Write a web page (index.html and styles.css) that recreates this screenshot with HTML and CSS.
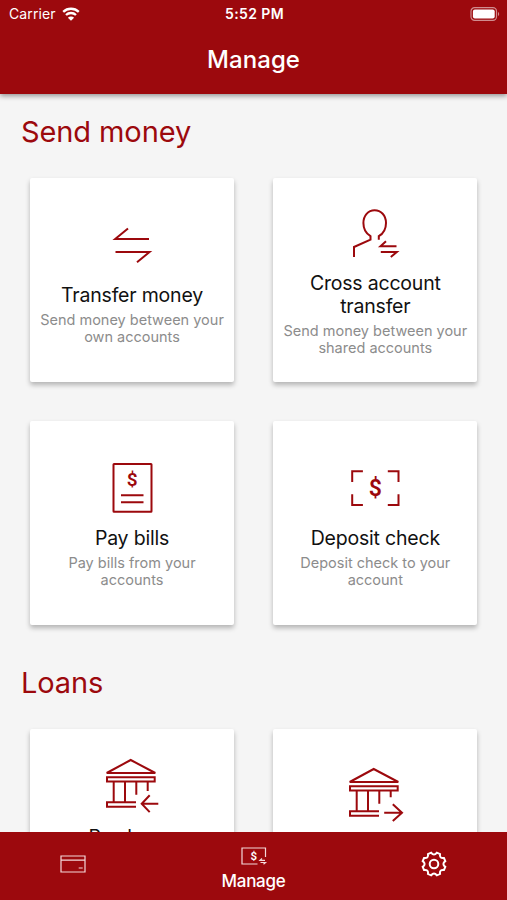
FILE: index.html
```html
<!DOCTYPE html>
<html lang="en">
<head>
  <meta charset="UTF-8">
  <title>Manage</title>
  <link rel="stylesheet" href="styles.css">
</head>
<body>
  <header class="header">
    <div class="status">
      <div class="carrier">
        <span>Carrier</span>
        <svg class="wifi" width="18" height="14" viewBox="0 0 18 14">
          <path d="M1.2 4.9a11.2 11.2 0 0 1 15.6 0M4 8a7.2 7.2 0 0 1 10 0" />
          <path class="fill" d="M9 13.8L5.9 10.7a4.4 4.4 0 0 1 6.2 0z" />
        </svg>
      </div>
      <div class="time">5:52 PM</div>
      <svg class="battery" width="30" height="14" viewBox="0 0 30 14">
        <rect class="shell" x="1" y="0.7" width="25.5" height="12.6" rx="3.6" />
        <rect class="charge" x="2.9" y="2.6" width="21.8" height="8.8" rx="2" />
        <path class="cap" d="M28 5v4a2.3 2.3 0 0 0 0-4z" />
      </svg>
    </div>
    <h1>Manage</h1>
  </header>

  <main class="content">
    <h2>Send money</h2>
    <div class="cards">
      <div class="card">
        <svg class="icon" viewBox="0 0 60 60">
          <path d="M47 23H13.2L26 12.5M13.5 36h34L35 46.3" />
        </svg>
        <h3>Transfer money</h3>
        <p>Send money between your own accounts</p>
      </div>
      <div class="card">
        <svg class="icon" viewBox="0 0 60 60">
          <path d="M33.8 35.8v-3.6C38.5 29.5 41 24 41 19C41 11.5 36 6.2 29.6 6.2S18.4 11.5 18.4 19C18.4 24 21 29.5 25.5 32.2v3.4L9 43v10" />
          <path d="M51.5 42.3H35.5L41 37.3M35.8 48h16L45.8 53" />
        </svg>
        <h3>Cross account transfer</h3>
        <p>Send money between your shared accounts</p>
      </div>
      <div class="card">
        <svg class="icon" viewBox="0 0 60 60">
          <rect x="11.5" y="5" width="38" height="47.8" rx="0.5" />
          <path d="M19 36.3h22.5M19 43.3h22.5" />
          <text x="30.3" y="27.2" font-size="19">$</text>
        </svg>
        <h3>Pay bills</h3>
        <p>Pay bills from your accounts</p>
      </div>
      <div class="card">
        <svg class="icon" viewBox="0 0 60 60">
          <path d="M7.2 23V12.3h10.7M42.8 12.3h10.7V23M53.5 35.3V46H42.8M17.9 46H7.2V35.3" />
          <text x="30.2" y="37" font-size="23">$</text>
        </svg>
        <h3>Deposit check</h3>
        <p>Deposit check to your account</p>
      </div>
    </div>

    <h2>Loans</h2>
    <div class="cards">
      <div class="card">
        <svg class="icon bank" viewBox="0 0 60 66">
          <path d="M28.7 8L53.3 21H4.7zM5 25.2h47.7v4.2H5z" />
          <path d="M11.7 29.4v21M23 29.4v21M34.3 29.4v13.4M45.7 29.4V39M34 50.3H5v4.4h29" />
          <path d="M56.3 51.7H39.7M47.7 43.3l-8 8.4l8 8.4" />
        </svg>
        <h3>Pay loans<br>installment</h3>
        <p>Pay loan installments from your account</p>
      </div>
      <div class="card">
        <svg class="icon bank" viewBox="0 0 60 66">
          <path d="M28.7 8L53.3 21H4.7zM5 25.2h47.7v4.2H5z" />
          <path d="M11.7 29.4v21M23 29.4v21M34.3 29.4v13.4M45.7 29.4v6.8M34 50.3H5v4.4h29" />
          <path d="M39.2 51.7h18M47.8 43.3l9.2 8.4l-9.2 8.4" />
        </svg>
        <h3>Transfer money from loan</h3>
        <p>Use your credit line</p>
      </div>
    </div>
  </main>

  <nav class="tabs">
    <div class="tab">
      <svg width="26" height="18" viewBox="0 0 26 18">
        <path d="M1 1h24v16H1zM1 5.2h24M18.7 13h4" />
      </svg>
    </div>
    <div class="tab active">
      <svg width="26" height="19" viewBox="0 0 26 19">
        <path d="M16.5 17H1V1h23.5v9" />
        <path d="M24 13.3h-5l2-1.8M19.5 15.5h5l-2 1.8" />
        <text x="12.9" y="13" font-size="11.5">$</text>
      </svg>
      <span>Manage</span>
    </div>
    <div class="tab">
      <svg class="gear" width="26" height="26" viewBox="-13 -13 26 26">
        <path d="M-2.9 -11.3Q0 -7.5 2.9 -11.3L6 -10Q5.3 -5.3 10 -6L11.3 -2.9Q7.5 0 11.3 2.9L10 6Q5.3 5.3 6 10L2.9 11.3Q0 7.5 -2.9 11.3L-6 10Q-5.3 5.3 -10 6L-11.3 2.9Q-7.5 0 -11.3 -2.9L-10 -6Q-5.3 -5.3 -6 -10z" />
        <circle r="4.3" />
      </svg>
    </div>
  </nav>
</body>
</html>
```

FILE: styles.css
```css
* {
  box-sizing: border-box;
}

body {
  margin: 0;
  height: 100vh;
  display: flex;
  flex-direction: column;
  overflow: hidden;
  background: #f5f5f5;
  font-family: Inter, "Liberation Sans", sans-serif;
}

h1, h2, h3, p {
  margin: 0;
  font-weight: 400;
}

svg {
  fill: none;
  stroke-width: 2;
  overflow: visible;
}

.header {
  flex: none;
  height: 94px;
  background: #9c090d;
  color: #fff;
  text-align: center;
  box-shadow: 0 2px 5px rgba(0,0,0,0.4);
  z-index: 1;
}

.status {
  display: grid;
  grid-template-columns: 1fr auto 1fr;
  align-items: center;
  height: 27px;
  padding: 0 7px 0 9px;
  font-size: 14px;
}

.carrier {
  display: flex;
  align-items: center;
  gap: 6px;
  letter-spacing: 0.1px;
}

.wifi {
  stroke: #fff;
  stroke-width: 2.3;
}

.wifi .fill {
  fill: #fff;
  stroke: none;
}

.time {
  font-weight: 600;
  letter-spacing: 0.4px;
}

.battery {
  justify-self: end;
}

.shell {
  stroke: #d08d8f;
  stroke-width: 1.2;
}

.charge {
  fill: #fff;
}

.cap {
  fill: #d08d8f;
}

h1 {
  font-size: 24px;
  line-height: 66px;
  font-weight: 500;
  letter-spacing: 0.1px;
}

.content {
  flex: 1;
  min-height: 0;
  overflow: hidden;
}

h2 {
  height: 84px;
  padding: 20px 21px 0;
  color: #9c090d;
  font-size: 29px;
  line-height: 36px;
  letter-spacing: -0.1px;
}

.cards {
  display: grid;
  grid-template-columns: 204px 204px;
  gap: 39.4px 39.3px;
  padding: 0 30px;
  margin-bottom: 20px;
}

.card {
  height: 204px;
  padding: 0 8px;
  display: flex;
  flex-direction: column;
  align-items: center;
  justify-content: center;
  background: #fff;
  border-radius: 2px;
  box-shadow: 0 3px 5px rgba(0,0,0,0.27);
  text-align: center;
}

.icon {
  width: 60px;
  height: 60px;
  margin-bottom: 8px;
  flex: none;
  stroke: #9c090d;
}

.bank {
  height: 66px;
}

svg text {
  stroke: none;
  font-family: Roboto, sans-serif;
  font-weight: 600;
  text-anchor: middle;
}

.icon text {
  fill: #9c090d;
}

h3 {
  color: #111;
  font-size: 19.5px;
  line-height: 23px;
  letter-spacing: -0.2px;
}

p {
  margin-top: 4px;
  color: #8c8c8c;
  font-size: 14.5px;
  line-height: 17px;
  letter-spacing: 0;
}

.tabs {
  flex: none;
  height: 68px;
  padding: 0 23px;
  display: flex;
  justify-content: space-between;
  background: #9c090d;
  color: #fff;
}

.tab {
  width: 100px;
  display: flex;
  flex-direction: column;
  align-items: center;
  justify-content: center;
  padding-bottom: 4px;
}

.tab svg {
  stroke: #f3d9da;
  stroke-width: 1.2;
}

.tab .gear {
  stroke: #fff;
  stroke-width: 2;
}

.tab text {
  fill: #fff;
}

.tab span {
  margin-top: 4px;
  font-size: 17px;
  line-height: 22px;
  letter-spacing: -0.3px;
}

.active {
  padding: 7px 0 0;
  font-weight: 500;
}
```
